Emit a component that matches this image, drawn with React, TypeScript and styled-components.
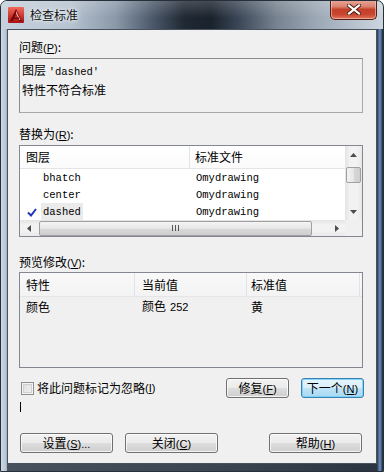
import React from "react";
import styled, { createGlobalStyle } from "styled-components";

const Global = createGlobalStyle`
  html, body { margin: 0; padding: 0; background: #ffffff; }
  body { font-family: "Noto Sans CJK SC", "Liberation Sans", sans-serif; font-size: 12px; color: #000; }
  * { box-sizing: border-box; }
`;

const CJK = `"Noto Sans CJK SC", "Liberation Sans", sans-serif`;

const Window = styled.div`
  width: 384px;
  height: 472px;
  border: 1px solid #27303a;
  border-radius: 7px 7px 0 0;
  overflow: hidden;
  display: flex;
  flex-direction: column;
  background:
    linear-gradient(to right, transparent 0, transparent 376px, #2c394b 376px, #6a92c2 379px, #33445e 381px, #1d2636 382px),
    linear-gradient(to right, #cdd8e3 0, #b4c4d4 5px, #98a8ba 6px, transparent 6px),
    linear-gradient(to right, #48525e, #3a4350 60%, #2a3340);
`;

const TitleBar = styled.div`
  height: 28px;
  flex: none;
  display: flex;
  align-items: flex-start;
  background:
    linear-gradient(to bottom, rgba(255,255,255,0.18), rgba(255,255,255,0) 60%),
    linear-gradient(to right, #c6d1dc 0%, #b6c3d0 18%, #8a98a8 30%, #4a5768 40%, #1f2833 48%, #1a222c 55%, #3a4656 62%, #76828f 72%, #9aa6b3 82%, #b9c4cf 93%, #cdd6df 100%);
`;

const AppIcon = styled.svg`
  width: 16px;
  height: 16px;
  margin: 6px 0 0 7px;
  flex: none;
`;

const Title = styled.div`
  margin: 7px 0 0 6px;
  font: 12px/14px ${CJK};
  color: #111;
  text-shadow: 0 0 6px rgba(255,255,255,0.9), 0 0 3px rgba(255,255,255,0.9);
`;

const CloseBtn = styled.div`
  margin: -1px 6px 0 auto;
  width: 47px;
  height: 20px;
  border: 1px solid #4e1e17;
  border-top: none;
  border-radius: 0 0 5px 5px;
  background: linear-gradient(to bottom, #e8a89a 0%, #d9826f 35%, #c4402a 50%, #c8452e 75%, #e0765c 100%);
  box-shadow: inset 0 0 0 1px rgba(255,210,200,0.55);
  display: flex;
  align-items: center;
  justify-content: center;
`;

const Client = styled.div`
  margin: 0 6px;
  height: 435px;
  flex: none;
  border: 1px solid #48525e;
  background: #f0f0f0;
  display: flex;
  flex-direction: column;
  padding: 0 12px 0 11px;
`;

const Label = styled.div<{ $mt: number }>`
  margin-top: ${(p) => p.$mt}px;
  height: 14px;
  font: 12px/14px ${CJK};
  color: #000;
`;

const Mn = styled.span`
  font-family: "Liberation Sans", sans-serif;
  font-size: 11px;
`;

const InfoBox = styled.div`
  margin-top: 4px;
  width: 344px;
  height: 55px;
  border: 1px solid #a8a8a8;
  border-top-color: #8c8c8c;
  border-left-color: #8c8c8c;
  background: #f0f0f0;
  padding: 2px 0 0 2px;
  font: 12px/17px ${CJK};
`;

const Mono = styled.span`
  font-family: "Liberation Mono", monospace;
  font-size: 10.5px;
`;

const ListFrame = styled.div<{ $h: number; $bg: string; $mt: number }>`
  margin-top: ${(p) => p.$mt}px;
  width: 344px;
  height: ${(p) => p.$h}px;
  border: 1px solid #828790;
  background: ${(p) => p.$bg};
`;

const ScrollGrid = styled.div`
  display: grid;
  grid-template-columns: 325px 17px;
  grid-template-rows: 74px 16px;
  height: 100%;
`;

const ListBody = styled.div`
  display: flex;
  flex-direction: column;
  background: #fff;
`;

const Header = styled.div<{ $cols: string; $h: number; $bg: string }>`
  display: grid;
  grid-template-columns: ${(p) => p.$cols};
  height: ${(p) => p.$h}px;
  flex: none;
  background: ${(p) => p.$bg};
  border-bottom: 1px solid #e5e5e5;
`;

const HeadCell = styled.div<{ $pl: number; $div?: boolean }>`
  padding-left: ${(p) => p.$pl}px;
  display: flex;
  align-items: center;
  font: 12px/14px ${CJK};
  color: #000;
  border-right: ${(p) => (p.$div ? "1px solid #e2e3e5" : "none")};
`;

const Row = styled.div<{ $cols: string }>`
  display: grid;
  grid-template-columns: ${(p) => p.$cols};
  height: 17px;
  align-items: center;
`;

const NameCell = styled.div`
  display: flex;
  align-items: center;
  height: 17px;
`;

const CheckSlot = styled.div`
  width: 21px;
  height: 17px;
  display: flex;
  align-items: center;
  justify-content: center;
  padding-left: 2px;
  padding-top: 2px;
`;

const NameText = styled.span<{ $sel?: boolean }>`
  height: 17px;
  line-height: 19px;
  padding: 0 2px;
  background: ${(p) => (p.$sel ? "#ebebeb" : "transparent")};
  font-family: "Liberation Mono", monospace;
  font-size: 10.5px;
`;

const ValCell = styled.div<{ $pl: number }>`
  padding-left: ${(p) => p.$pl}px;
  font-family: "Liberation Mono", monospace;
  font-size: 10.5px;
  line-height: 19px;
  height: 17px;
`;

const VScroll = styled.div`
  grid-row: 1 / 2;
  grid-column: 2 / 3;
  display: flex;
  flex-direction: column;
  background: linear-gradient(to right, #e3e3e3, #f2f2f2 30%, #f2f2f2 70%, #e8e8e8);
`;

const HScroll = styled.div`
  display: flex;
  align-items: center;
  background: linear-gradient(to bottom, #e3e3e3, #f2f2f2 30%, #f2f2f2 70%, #e8e8e8);
`;

const ArrowBox = styled.div<{ $w: number; $h: number }>`
  width: ${(p) => p.$w}px;
  height: ${(p) => p.$h}px;
  flex: none;
  display: flex;
  align-items: center;
  justify-content: center;
`;

const VThumb = styled.div`
  margin: 4px 1px 0 1px;
  height: 16px;
  border: 1px solid #a0a0a0;
  border-radius: 2px;
  background: linear-gradient(to right, #f4f4f4, #e6e6e6 50%, #d8d8d8 51%, #cfcfcf);
`;

const HThumb = styled.div`
  margin-left: 2px;
  width: 273px;
  height: 15px;
  border: 1px solid #a0a0a0;
  border-radius: 2px;
  background: linear-gradient(to bottom, #f4f4f4, #e6e6e6 50%, #d8d8d8 51%, #cfcfcf);
  display: flex;
  align-items: center;
  justify-content: center;
`;

const Grip = styled.div`
  width: 7px;
  height: 6px;
  background: repeating-linear-gradient(to right, #555 0 1px, transparent 1px 3px);
`;

const Corner = styled.div`
  background: #f0f0f0;
`;

const Spacer = styled.div`
  flex: 1;
`;

const PlainCell = styled.span<{ $pl: number }>`
  padding-left: ${(p) => p.$pl}px;
  font: 12px/17px ${CJK};
`;

const Num = styled.span`
  font-family: "Liberation Sans", sans-serif;
  font-size: 11px;
  margin-left: 4px;
`;

const ActionRow = styled.div`
  margin-top: 10px;
  height: 20px;
  display: flex;
  align-items: center;
`;

const CheckLabel = styled.label`
  display: flex;
  align-items: center;
  margin-left: 2px;
  font: 12px/14px ${CJK};
`;

const CheckBox = styled.span`
  width: 13px;
  height: 13px;
  margin-right: 3px;
  border: 1px solid #8f8f8f;
  background: linear-gradient(135deg, #dcdcdc, #f4f4f4);
  box-shadow: inset 0 0 0 1px #f4f4f4, inset 0 0 0 2px #d0d0d0;
`;

const Btn = styled.button<{ $w: number; $primary?: boolean; $ml?: string }>`
  width: ${(p) => p.$w}px;
  height: 20px;
  margin: 0;
  margin-left: ${(p) => p.$ml ?? "0"};
  padding: 0;
  font: 12px/14px ${CJK};
  color: #000;
  border: 1px solid ${(p) => (p.$primary ? "#3c7fb1" : "#707070")};
  border-radius: 3px;
  background: ${(p) =>
    p.$primary
      ? "linear-gradient(#e5f4fc 0%, #d9effb 50%, #bde4f8 51%, #a8d8f3 100%)"
      : "linear-gradient(#f2f2f2 0%, #ebebeb 50%, #dddddd 51%, #cfcfcf 100%)"};
  box-shadow: inset 0 0 0 1px ${(p) => (p.$primary ? "rgba(120,210,245,0.9)" : "rgba(255,255,255,0.75)")};
`;

const Caret = styled.div`
  margin-top: 4px;
  margin-left: 1px;
  width: 1px;
  height: 10px;
  background: #000;
`;

const BottomRow = styled.div`
  margin-top: 21px;
  display: flex;
  align-items: center;
  padding-right: 2px;
`;

const Arrow = ({ dir }: { dir: "up" | "down" | "left" | "right" }) => {
  const pts =
    dir === "up"
      ? "0,4 7,4 3.5,0"
      : dir === "down"
      ? "0,0 7,0 3.5,4"
      : dir === "left"
      ? "4,0 4,7 0,3.5"
      : "0,0 0,7 4,3.5";
  const w = dir === "up" || dir === "down" ? 7 : 4;
  const h = dir === "up" || dir === "down" ? 4 : 7;
  return (
    <svg width={w} height={h} viewBox={`0 0 ${w} ${h}`}>
      <polygon points={pts} fill="#4d4d4d" />
    </svg>
  );
};

const cols1 = "170px 155px";
const cols2 = "115px 112px 113px 2px";

export default function App() {
  return (
    <>
      <Global />
      <Window>
        <TitleBar>
          <AppIcon viewBox="0 0 16 16">
            <defs>
              <linearGradient id="ig" x1="0" y1="0" x2="0" y2="1">
                <stop offset="0" stopColor="#f26a5a" />
                <stop offset="1" stopColor="#a81010" />
              </linearGradient>
            </defs>
            <rect x="0" y="0" width="16" height="16" rx="1" fill="url(#ig)" />
            <polygon points="8,2 14,14 11,14 8,7.5 5,14 2,14" fill="#7a0808" />
            <polygon points="8,4 12.5,13 11.2,13 8,6.5" fill="#ffb3a8" />
            <rect x="5" y="10.5" width="6" height="1.5" fill="#7a0808" />
          </AppIcon>
          <Title>检查标准</Title>
          <CloseBtn>
            <svg width="14" height="11" viewBox="0 0 14 11">
              <path d="M2 1.5 L12 9.5 M12 1.5 L2 9.5" stroke="#4a1a12" strokeWidth="4" strokeLinecap="square" />
              <path d="M2 1.5 L12 9.5 M12 1.5 L2 9.5" stroke="#ffffff" strokeWidth="2.2" strokeLinecap="square" />
            </svg>
          </CloseBtn>
        </TitleBar>
        <Client>
          <Label $mt={10}>
            问题<Mn>(<u>P</u>)</Mn>:
          </Label>
          <InfoBox>
            <div>
              图层 <Mono>'dashed'</Mono>
            </div>
            <div>特性不符合标准</div>
          </InfoBox>
          <Label $mt={14}>
            替换为<Mn>(<u>R</u>)</Mn>:
          </Label>
          <ListFrame $h={92} $bg="#ffffff" $mt={4}>
            <ScrollGrid>
              <ListBody>
                <Header $cols={cols1} $h={23} $bg="linear-gradient(#ffffff, #fbfbfb)">
                  <HeadCell $pl={6} $div>图层</HeadCell>
                  <HeadCell $pl={5}>标准文件</HeadCell>
                </Header>
                {[
                  { n: "bhatch", sel: false },
                  { n: "center", sel: false },
                  { n: "dashed", sel: true },
                ].map((r) => (
                  <Row key={r.n} $cols={cols1}>
                    <NameCell>
                      <CheckSlot>
                        {r.sel && (
                          <svg width="10" height="9" viewBox="0 0 10 9">
                            <path d="M1 4.5 L4 7.5 L9 1" stroke="#1f35b8" strokeWidth="2" fill="none" />
                          </svg>
                        )}
                      </CheckSlot>
                      <NameText $sel={r.sel}>{r.n}</NameText>
                    </NameCell>
                    <ValCell $pl={6}>Omydrawing</ValCell>
                  </Row>
                ))}
              </ListBody>
              <VScroll>
                <ArrowBox $w={17} $h={17}>
                  <Arrow dir="up" />
                </ArrowBox>
                <VThumb />
                <Spacer />
                <ArrowBox $w={17} $h={17}>
                  <Arrow dir="down" />
                </ArrowBox>
              </VScroll>
              <HScroll>
                <ArrowBox $w={17} $h={16}>
                  <Arrow dir="left" />
                </ArrowBox>
                <HThumb>
                  <Grip />
                </HThumb>
                <Spacer />
                <ArrowBox $w={17} $h={16}>
                  <Arrow dir="right" />
                </ArrowBox>
              </HScroll>
              <Corner />
            </ScrollGrid>
          </ListFrame>
          <Label $mt={18}>
            预览修改<Mn>(<u>V</u>)</Mn>:
          </Label>
          <ListFrame $h={96} $bg="#f0f0f0" $mt={3}>
            <Header $cols={cols2} $h={24} $bg="linear-gradient(#f9f9f9, #f3f3f3)">
              <HeadCell $pl={6} $div>特性</HeadCell>
              <HeadCell $pl={7} $div>当前值</HeadCell>
              <HeadCell $pl={4} $div>标准值</HeadCell>
              <HeadCell $pl={0} />
            </Header>
            <Row $cols={cols2}>
              <PlainCell $pl={6}>颜色</PlainCell>
              <PlainCell $pl={7}>
                颜色<Num>252</Num>
              </PlainCell>
              <PlainCell $pl={4}>黄</PlainCell>
              <span />
            </Row>
          </ListFrame>
          <ActionRow>
            <CheckLabel>
              <CheckBox />
              将此问题标记为忽略<Mn>(<u>I</u>)</Mn>
            </CheckLabel>
            <Btn $w={63} $ml="auto">
              修复<Mn>(<u>F</u>)</Mn>
            </Btn>
            <Btn $w={63} $ml="12px" $primary>
              下一个<Mn>(<u>N</u>)</Mn>
            </Btn>
          </ActionRow>
          <Caret />
          <BottomRow>
            <Btn $w={93} $ml="1px">
              设置<Mn>(<u>S</u>)...</Mn>
            </Btn>
            <Btn $w={93} $ml="12px">
              关闭<Mn>(<u>C</u>)</Mn>
            </Btn>
            <Btn $w={93} $ml="auto">
              帮助<Mn>(<u>H</u>)</Mn>
            </Btn>
          </BottomRow>
        </Client>
      </Window>
    </>
  );
}
